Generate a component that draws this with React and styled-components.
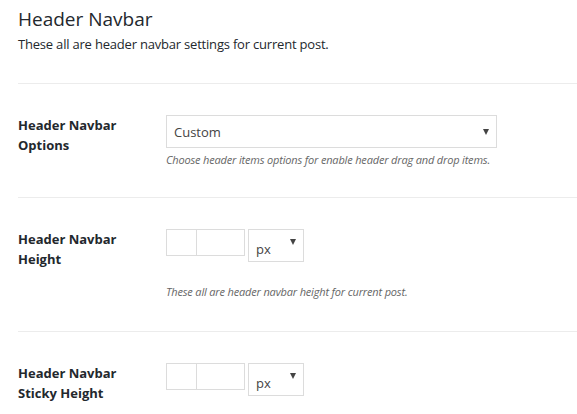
import styled, { createGlobalStyle } from 'styled-components'

const Global = createGlobalStyle`
  body {
    margin: 0;
    background: #fff;
    font-family: "Open Sans", "Noto Sans", sans-serif;
    color: #23282d;
  }
`

const Page = styled.div`
  padding: 6px 0 0 18px;
`

const Title = styled.h2`
  margin: 0;
  font-size: 19px;
  line-height: 26px;
  font-weight: 400;
`

const Lead = styled.p`
  margin: 3px 0 0;
  font-size: 13px;
  letter-spacing: -0.2px;
  line-height: 18px;
`

const Row = styled.div`
  display: flex;
  border-top: 1px solid #ececec;
  padding: 31px 0 ${p => p.$bottom || 32}px;
  margin-top: ${p => p.$first ? 30 : 0}px;
`

const Label = styled.div`
  width: 148px;
  flex: none;
  font-size: 13px;
  font-weight: 700;
  line-height: 20px;
`

const Field = styled.div`
  display: flex;
  flex-direction: column;
`

const Select = styled.div`
  position: relative;
  box-sizing: border-box;
  width: ${p => p.$w}px;
  height: 33px;
  border: 1px solid #dcdcdc;
  font-size: 13px;
  color: #444;
  padding: ${p => p.$pt || 7}px 0 0 7px;
  &::after {
    content: "";
    position: absolute;
    right: 7px;
    top: ${p => p.$at || 13}px;
    border-left: 3.5px solid transparent;
    border-right: 3.5px solid transparent;
    border-top: 6px solid #444;
  }
`

const Units = styled.div`
  display: flex;
  gap: 3px;
  align-items: flex-start;
`

const NumberBox = styled.div`
  display: flex;
  box-sizing: border-box;
  width: 79px;
  height: 27px;
  border: 1px solid #dcdcdc;
`

const Spin = styled.div`
  width: 29px;
  border-right: 1px solid #dcdcdc;
`

const Help = styled.p`
  margin: ${p => p.$top || 4}px 0 0;
  font-size: 11px;
  letter-spacing: -0.17px;
  font-style: italic;
  line-height: 14px;
  color: #666;
`

function SizeControl() {
  return (
    <Units>
      <NumberBox><Spin /></NumberBox>
      <Select $w={56} $pt={10} $at={9}>px</Select>
    </Units>
  )
}

export default function App() {
  return (
    <Page>
      <Global />
      <Title>Header Navbar</Title>
      <Lead>These all are header navbar settings for current post.</Lead>

      <Row $first $bottom={30}>
        <Label>Header Navbar<br />Options</Label>
        <Field>
          <Select $w={331}>Custom</Select>
          <Help $top={5}>Choose header items options for enable header drag and drop items.</Help>
        </Field>
      </Row>

      <Row>
        <Label>Header Navbar<br />Height</Label>
        <Field>
          <SizeControl />
          <Help $top={23}>These all are header navbar height for current post.</Help>
        </Field>
      </Row>

      <Row>
        <Label>Header Navbar<br />Sticky Height</Label>
        <Field>
          <SizeControl />
        </Field>
      </Row>
    </Page>
  )
}
